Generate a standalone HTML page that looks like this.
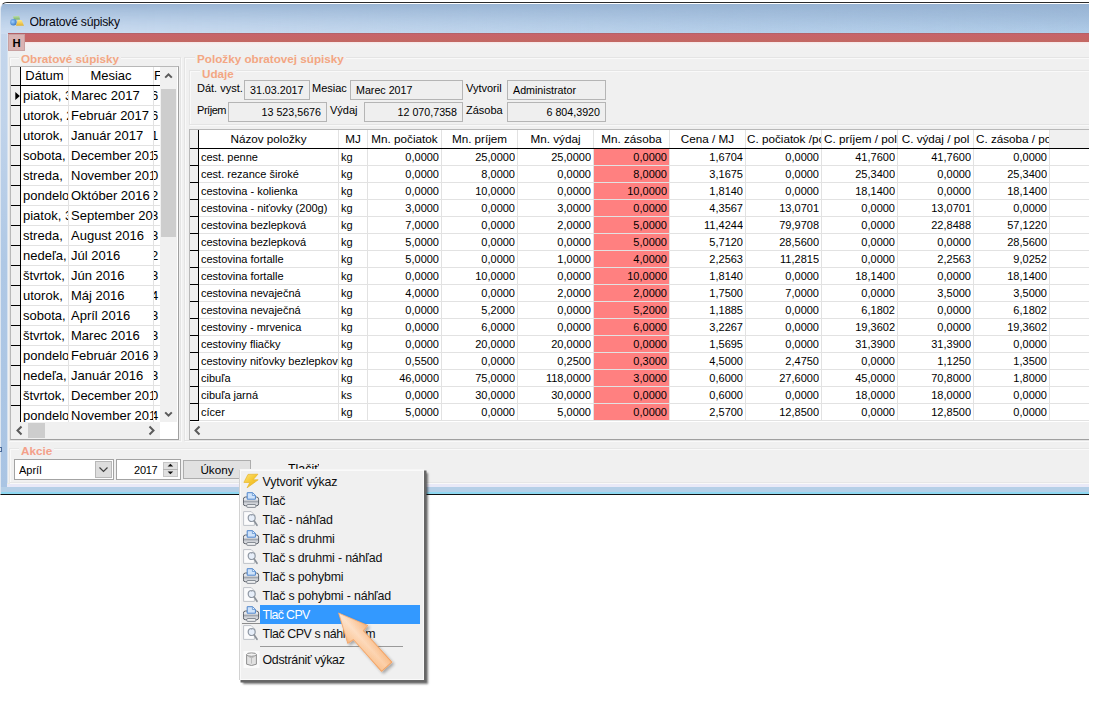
<!DOCTYPE html>
<html><head><meta charset="utf-8"><title>Obratové súpisky</title>
<style>
*{box-sizing:border-box;margin:0;padding:0}
html,body{width:1106px;height:702px;background:#fff;overflow:hidden}
body{font-family:"Liberation Sans",sans-serif;color:#000;position:relative}
.a{position:absolute}
.t{position:absolute;white-space:nowrap;overflow:hidden}
#win{left:0;top:2px;width:1089px;height:493px;background:linear-gradient(180deg,#c6d7ec 0,#c0d3ea 120px,#afc8e5 260px,#a9c4e3 100%);border-top:1px solid #2a2a2a;border-left:1px solid #dde6f1;border-bottom:1px solid #101010;border-top-left-radius:7px;overflow:hidden}
#tb{left:0;top:0;width:1089px;height:31px;background:linear-gradient(180deg,#fff 0,#fff 1px,#97b3d3 1.5px,#9fbbda 40%,#b2ceea 100%)}
#tb2{left:0;top:1px;width:1089px;height:30px;background:linear-gradient(90deg,rgba(206,221,240,.95) 0,rgba(202,218,238,.8) 300px,rgba(190,211,235,.35) 750px,rgba(180,205,232,0) 1089px);-webkit-mask-image:linear-gradient(180deg,rgba(0,0,0,.1) 0,rgba(0,0,0,.55) 50%,rgba(0,0,0,1) 100%);mask-image:linear-gradient(180deg,rgba(0,0,0,.1) 0,rgba(0,0,0,.55) 50%,rgba(0,0,0,1) 100%)}

.gl{position:absolute;font-weight:bold;color:#f3a683;background:#f0f0f0;white-space:nowrap;padding:0 2px}
.gb{position:absolute;border:1px solid #e4e4e4;box-shadow:inset 1px 1px 0 #f9f9f9, 1px 1px 0 #f9f9f9}
.fld{position:absolute;border:1px solid #b5b5b5;background:#efefef;font-size:10.7px;white-space:nowrap;overflow:hidden}
.lb{position:absolute;font-size:11px;white-space:nowrap}
.lc{position:absolute;font-size:13px;white-space:nowrap;overflow:hidden;height:19px;line-height:19px}
.rc{position:absolute;font-size:11px;white-space:nowrap;overflow:hidden;height:16px;line-height:16px}
.rh{position:absolute;font-size:11.7px;white-space:nowrap;overflow:hidden;height:18px;line-height:18px;text-align:center}
.mi{position:absolute;left:262.5px;font-size:12.4px;letter-spacing:-.17px;white-space:nowrap;height:19px;line-height:18px;color:#111}
</style></head><body>

<div id="win" class="a">
<div id="tb" class="a"></div><div id="tb2" class="a"></div>
<div class="a" style="left:6px;top:31px;width:1px;height:455px;background:#d5e2f1"></div>
<div class="a" style="left:6px;top:480px;width:1083px;height:1px;background:#e9ebe2"></div>
<div class="a" style="left:6px;top:481px;width:1083px;height:3px;background:#e9e9f7"></div>
<div class="a" style="left:0;top:484px;width:1089px;height:5px;background:#b5cfe7"></div>
<div class="a" style="left:0;top:489px;width:1089px;height:2px;background:#8fd8f1"></div>
</div>
<svg class="a" style="left:9px;top:14px" width="16" height="14" viewBox="0 0 16 14">
<defs><radialGradient id="gb" cx=".4" cy=".4" r=".7"><stop offset="0" stop-color="#9fd0ff"/><stop offset="1" stop-color="#2f6fc0"/></radialGradient>
<linearGradient id="gy" x1="0" y1="0" x2="0" y2="1"><stop offset="0" stop-color="#ffe98a"/><stop offset="1" stop-color="#e0b030"/></linearGradient>
<linearGradient id="gg" x1="0" y1="0" x2="0" y2="1"><stop offset="0" stop-color="#bfe3a0"/><stop offset="1" stop-color="#6fae4a"/></linearGradient></defs>
<path d="M4 2.2 L10.2 1.8 L11 5.6 L5 5.8Z" fill="url(#gg)" opacity=".85"/>
<circle cx="4.4" cy="8.3" r="3.2" fill="url(#gb)"/>
<path d="M8.6 6 L12.6 6 L15 11.8 L7 11.8 Z" fill="url(#gy)"/>
</svg>
<div class="t" style="left:29.5px;top:14px;font-size:12.2px;letter-spacing:-.24px;line-height:16px;color:#0a0a14">Obratové súpisky</div>
<div class="a" style="left:8px;top:33px;width:1081px;height:9px;background:linear-gradient(180deg,#c8636a,#c36862);border-top:1px solid #b46268"></div>
<div class="a" style="left:8px;top:42px;width:1081px;height:8px;background:linear-gradient(180deg,#f7e4e4 0,#f6f1f1 2px,#f0f0f0 100%)"></div>
<div class="a" style="left:8px;top:50px;width:1081px;height:433px;background:#f0f0f0"></div>
<div class="a" style="left:8px;top:34px;width:17px;height:17px;background:#d9b3b3;border:1px solid #c9a0a0;font-weight:bold;font-size:11.3px;line-height:17px;text-align:center">H</div>
<div class="gb" style="left:9px;top:57px;width:172px;height:384px"></div>
<div class="gl" style="left:19px;top:51px;font-size:11.7px;line-height:16px">Obratové súpisky</div>
<div class="a" style="left:10px;top:66px;width:169px;height:374px;background:#fff;border:1px solid #a0a0a0;border-top-color:#b8b8b8;border-left-color:#b8b8b8"></div>
<div class="a" style="left:11px;top:67px;width:10px;height:355px;background:#f0f0f0"></div>
<div class="a" style="left:20px;top:67px;width:1px;height:355px;background:#000"></div>
<div class="lc" style="left:21px;top:66px;width:47px;text-align:center">Dátum</div>
<div class="lc" style="left:69px;top:66px;width:84px;text-align:center">Mesiac</div>
<div class="lc" style="left:154px;top:66px;width:6px;">F</div>
<div class="a" style="left:68px;top:67px;width:1px;height:355px;background:#e2e2e2"></div>
<div class="a" style="left:153px;top:67px;width:1px;height:355px;background:#e2e2e2"></div>
<div class="a" style="left:11px;top:85px;width:149px;height:1px;background:#000"></div>
<div class="lc" style="left:23px;top:86px;width:45px">piatok, 3</div>
<div class="lc" style="left:71px;top:86px;width:82px">Marec 2017</div>
<div class="lc" style="left:154px;top:86px;width:6px;text-indent:-3px">6</div>
<div class="a" style="left:21px;top:105px;width:139px;height:1px;background:#e2e2e2"></div>
<div class="a" style="left:11px;top:105px;width:9px;height:1px;background:#000"></div>
<div class="lc" style="left:23px;top:106px;width:45px">utorok, 2</div>
<div class="lc" style="left:71px;top:106px;width:82px">Február 2017</div>
<div class="lc" style="left:154px;top:106px;width:6px;text-indent:-3px">6</div>
<div class="a" style="left:21px;top:125px;width:139px;height:1px;background:#e2e2e2"></div>
<div class="a" style="left:11px;top:125px;width:9px;height:1px;background:#000"></div>
<div class="lc" style="left:23px;top:126px;width:45px">utorok,</div>
<div class="lc" style="left:71px;top:126px;width:82px">Január 2017</div>
<div class="lc" style="left:154px;top:126px;width:6px;text-indent:-3px">1</div>
<div class="a" style="left:21px;top:145px;width:139px;height:1px;background:#e2e2e2"></div>
<div class="a" style="left:11px;top:145px;width:9px;height:1px;background:#000"></div>
<div class="lc" style="left:23px;top:146px;width:45px">sobota,</div>
<div class="lc" style="left:71px;top:146px;width:82px">December 2016</div>
<div class="lc" style="left:154px;top:146px;width:6px;text-indent:-3px">5</div>
<div class="a" style="left:21px;top:165px;width:139px;height:1px;background:#e2e2e2"></div>
<div class="a" style="left:11px;top:165px;width:9px;height:1px;background:#000"></div>
<div class="lc" style="left:23px;top:166px;width:45px">streda,</div>
<div class="lc" style="left:71px;top:166px;width:82px">November 2016</div>
<div class="lc" style="left:154px;top:166px;width:6px;text-indent:-3px">0</div>
<div class="a" style="left:21px;top:185px;width:139px;height:1px;background:#e2e2e2"></div>
<div class="a" style="left:11px;top:185px;width:9px;height:1px;background:#000"></div>
<div class="lc" style="left:23px;top:186px;width:45px">pondelo</div>
<div class="lc" style="left:71px;top:186px;width:82px">Október 2016</div>
<div class="lc" style="left:154px;top:186px;width:6px;text-indent:-3px">2</div>
<div class="a" style="left:21px;top:205px;width:139px;height:1px;background:#e2e2e2"></div>
<div class="a" style="left:11px;top:205px;width:9px;height:1px;background:#000"></div>
<div class="lc" style="left:23px;top:206px;width:45px">piatok, 3</div>
<div class="lc" style="left:71px;top:206px;width:82px">September 2016</div>
<div class="lc" style="left:154px;top:206px;width:6px;text-indent:-3px">3</div>
<div class="a" style="left:21px;top:225px;width:139px;height:1px;background:#e2e2e2"></div>
<div class="a" style="left:11px;top:225px;width:9px;height:1px;background:#000"></div>
<div class="lc" style="left:23px;top:226px;width:45px">streda,</div>
<div class="lc" style="left:71px;top:226px;width:82px">August 2016</div>
<div class="lc" style="left:154px;top:226px;width:6px;text-indent:-3px">3</div>
<div class="a" style="left:21px;top:245px;width:139px;height:1px;background:#e2e2e2"></div>
<div class="a" style="left:11px;top:245px;width:9px;height:1px;background:#000"></div>
<div class="lc" style="left:23px;top:246px;width:45px">nedeľa,</div>
<div class="lc" style="left:71px;top:246px;width:82px">Júl 2016</div>
<div class="lc" style="left:154px;top:246px;width:6px;text-indent:-3px">2</div>
<div class="a" style="left:21px;top:265px;width:139px;height:1px;background:#e2e2e2"></div>
<div class="a" style="left:11px;top:265px;width:9px;height:1px;background:#000"></div>
<div class="lc" style="left:23px;top:266px;width:45px">štvrtok,</div>
<div class="lc" style="left:71px;top:266px;width:82px">Jún 2016</div>
<div class="lc" style="left:154px;top:266px;width:6px;text-indent:-3px">3</div>
<div class="a" style="left:21px;top:285px;width:139px;height:1px;background:#e2e2e2"></div>
<div class="a" style="left:11px;top:285px;width:9px;height:1px;background:#000"></div>
<div class="lc" style="left:23px;top:286px;width:45px">utorok,</div>
<div class="lc" style="left:71px;top:286px;width:82px">Máj 2016</div>
<div class="lc" style="left:154px;top:286px;width:6px;text-indent:-3px">4</div>
<div class="a" style="left:21px;top:305px;width:139px;height:1px;background:#e2e2e2"></div>
<div class="a" style="left:11px;top:305px;width:9px;height:1px;background:#000"></div>
<div class="lc" style="left:23px;top:306px;width:45px">sobota,</div>
<div class="lc" style="left:71px;top:306px;width:82px">Apríl 2016</div>
<div class="lc" style="left:154px;top:306px;width:6px;text-indent:-3px">3</div>
<div class="a" style="left:21px;top:325px;width:139px;height:1px;background:#e2e2e2"></div>
<div class="a" style="left:11px;top:325px;width:9px;height:1px;background:#000"></div>
<div class="lc" style="left:23px;top:326px;width:45px">štvrtok,</div>
<div class="lc" style="left:71px;top:326px;width:82px">Marec 2016</div>
<div class="lc" style="left:154px;top:326px;width:6px;text-indent:-3px">3</div>
<div class="a" style="left:21px;top:345px;width:139px;height:1px;background:#e2e2e2"></div>
<div class="a" style="left:11px;top:345px;width:9px;height:1px;background:#000"></div>
<div class="lc" style="left:23px;top:346px;width:45px">pondelo</div>
<div class="lc" style="left:71px;top:346px;width:82px">Február 2016</div>
<div class="lc" style="left:154px;top:346px;width:6px;text-indent:-3px">9</div>
<div class="a" style="left:21px;top:365px;width:139px;height:1px;background:#e2e2e2"></div>
<div class="a" style="left:11px;top:365px;width:9px;height:1px;background:#000"></div>
<div class="lc" style="left:23px;top:366px;width:45px">nedeľa,</div>
<div class="lc" style="left:71px;top:366px;width:82px">Január 2016</div>
<div class="lc" style="left:154px;top:366px;width:6px;text-indent:-3px">3</div>
<div class="a" style="left:21px;top:385px;width:139px;height:1px;background:#e2e2e2"></div>
<div class="a" style="left:11px;top:385px;width:9px;height:1px;background:#000"></div>
<div class="lc" style="left:23px;top:386px;width:45px">štvrtok,</div>
<div class="lc" style="left:71px;top:386px;width:82px">December 2015</div>
<div class="lc" style="left:154px;top:386px;width:6px;text-indent:-3px">0</div>
<div class="a" style="left:21px;top:405px;width:139px;height:1px;background:#e2e2e2"></div>
<div class="a" style="left:11px;top:405px;width:9px;height:1px;background:#000"></div>
<div class="lc" style="left:23px;top:406px;width:45px">pondelo</div>
<div class="lc" style="left:71px;top:406px;width:82px">November 2015</div>
<div class="lc" style="left:154px;top:406px;width:6px;text-indent:-3px">4</div>
<svg class="a" style="left:15px;top:92px" width="6" height="9"><path d="M.3 0 L4.8 4 L.3 8Z" fill="#000"/></svg>
<div class="a" style="left:160px;top:67px;width:17px;height:355px;background:#f0f0f0"></div>
<div class="a" style="left:161px;top:89px;width:15px;height:148px;background:#cdcdcd"></div>
<svg class="a" style="left:164px;top:72px" width="9" height="7"><path d="M1.2 5.6 L4.5 2.3 L7.8 5.6" fill="none" stroke="#5a5a5a" stroke-width="2"/></svg>
<svg class="a" style="left:164px;top:411px" width="9" height="7"><path d="M1.2 1.4 L4.5 4.7 L7.8 1.4" fill="none" stroke="#5a5a5a" stroke-width="2"/></svg>
<div class="a" style="left:11px;top:422px;width:149px;height:17px;background:#f0f0f0"></div>
<div class="a" style="left:160px;top:422px;width:18px;height:17px;background:#fff"></div>
<div class="a" style="left:28px;top:423px;width:17px;height:15px;background:#cdcdcd"></div>
<svg class="a" style="left:15px;top:425px" width="8" height="11"><path d="M6.5 1.5 L2.5 5.5 L6.5 9.5" fill="none" stroke="#5a5a5a" stroke-width="2"/></svg>
<svg class="a" style="left:148px;top:425px" width="8" height="11"><path d="M1.5 1.5 L5.5 5.5 L1.5 9.5" fill="none" stroke="#5a5a5a" stroke-width="2"/></svg>
<div class="gb" style="left:184px;top:57px;width:920px;height:384px"></div>
<div class="gl" style="left:195px;top:51px;font-size:11.7px;line-height:16px">Položky obratovej súpisky</div>
<div class="gb" style="left:189px;top:70px;width:915px;height:55px"></div>
<div class="gl" style="left:200px;top:67px;font-size:11.7px;line-height:14px">Udaje</div>
<div class="lb" style="left:197px;top:82px">Dát. vyst.</div>
<div class="fld" style="left:244px;top:80px;width:66px;height:20px;line-height:18px;padding-left:5px">31.03.2017</div>
<div class="lb" style="left:312px;top:82px">Mesiac</div>
<div class="fld" style="left:350px;top:80px;width:113px;height:20px;line-height:18px;padding-left:5px">Marec 2017</div>
<div class="lb" style="left:466px;top:82px">Vytvoril</div>
<div class="fld" style="left:507px;top:80px;width:99px;height:20px;line-height:18px;padding-left:5px">Administrator</div>
<div class="lb" style="left:197px;top:104px;letter-spacing:-.45px">Príjem</div>
<div class="fld" style="left:228px;top:102px;width:99px;height:20px;line-height:18px;text-align:right;padding-right:5px">13 523,5676</div>
<div class="lb" style="left:330px;top:104px">Výdaj</div>
<div class="fld" style="left:364px;top:102px;width:99px;height:20px;line-height:18px;text-align:right;padding-right:5px">12 070,7358</div>
<div class="lb" style="left:466px;top:104px">Zásoba</div>
<div class="fld" style="left:507px;top:102px;width:99px;height:20px;line-height:18px;text-align:right;padding-right:5px">6 804,3920</div>
<div class="a" style="left:189px;top:129px;width:915px;height:311px;background:#fff;border:1px solid #a0a0a0;border-top-color:#b8b8b8;border-left-color:#b8b8b8"></div>
<div class="a" style="left:190px;top:130px;width:9px;height:291px;background:#f0f0f0"></div>
<div class="a" style="left:198px;top:130px;width:1px;height:291px;background:#000"></div>
<div class="a" style="left:1050px;top:130px;width:54px;height:18px;background:#f0f0f0"></div>
<div class="a" style="left:594px;top:149px;width:75px;height:272px;background:#ff8080"></div>
<div class="rh" style="left:199px;top:130px;width:139px;">Názov položky</div>
<div class="rh" style="left:339px;top:130px;width:28px;">MJ</div>
<div class="rh" style="left:368px;top:130px;width:73px;">Mn. počiatok</div>
<div class="rh" style="left:442px;top:130px;width:75px;">Mn. príjem</div>
<div class="rh" style="left:518px;top:130px;width:75px;">Mn. výdaj</div>
<div class="rh" style="left:594px;top:130px;width:75px;">Mn. zásoba</div>
<div class="rh" style="left:670px;top:130px;width:75px;">Cena / MJ</div>
<div class="rh" style="left:746px;top:130px;width:75px;text-align:left;padding-left:1px;">C. počiatok /po</div>
<div class="rh" style="left:822px;top:130px;width:75px;text-align:left;padding-left:2px;">C. príjem / pol</div>
<div class="rh" style="left:898px;top:130px;width:75px;">C. výdaj / pol</div>
<div class="rh" style="left:974px;top:130px;width:75px;text-align:left;padding-left:2px;">C. zásoba / po</div>
<div class="a" style="left:338px;top:130px;width:1px;height:291px;background:#e2e2e2"></div>
<div class="a" style="left:367px;top:130px;width:1px;height:291px;background:#e2e2e2"></div>
<div class="a" style="left:441px;top:130px;width:1px;height:291px;background:#e2e2e2"></div>
<div class="a" style="left:517px;top:130px;width:1px;height:291px;background:#e2e2e2"></div>
<div class="a" style="left:593px;top:130px;width:1px;height:291px;background:#e2e2e2"></div>
<div class="a" style="left:669px;top:130px;width:1px;height:291px;background:#e2e2e2"></div>
<div class="a" style="left:745px;top:130px;width:1px;height:291px;background:#e2e2e2"></div>
<div class="a" style="left:821px;top:130px;width:1px;height:291px;background:#e2e2e2"></div>
<div class="a" style="left:897px;top:130px;width:1px;height:291px;background:#e2e2e2"></div>
<div class="a" style="left:973px;top:130px;width:1px;height:291px;background:#e2e2e2"></div>
<div class="a" style="left:1049px;top:130px;width:1px;height:291px;background:#e2e2e2"></div>
<div class="a" style="left:190px;top:148px;width:914px;height:1px;background:#000"></div>
<div class="rc" style="left:201px;top:149px;width:137px">cest. penne</div>
<div class="rc" style="left:341px;top:149px;width:26px">kg</div>
<div class="rc" style="left:368px;top:149px;width:71px;text-align:right">0,0000</div>
<div class="rc" style="left:442px;top:149px;width:73px;text-align:right">25,0000</div>
<div class="rc" style="left:518px;top:149px;width:73px;text-align:right">25,0000</div>
<div class="rc" style="left:594px;top:149px;width:73px;text-align:right">0,0000</div>
<div class="rc" style="left:670px;top:149px;width:73px;text-align:right">1,6704</div>
<div class="rc" style="left:746px;top:149px;width:73px;text-align:right">0,0000</div>
<div class="rc" style="left:822px;top:149px;width:73px;text-align:right">41,7600</div>
<div class="rc" style="left:898px;top:149px;width:73px;text-align:right">41,7600</div>
<div class="rc" style="left:974px;top:149px;width:73px;text-align:right">0,0000</div>
<div class="a" style="left:199px;top:165px;width:905px;height:1px;background:#e2e2e2"></div>
<div class="a" style="left:190px;top:165px;width:8px;height:1px;background:#000"></div>
<div class="rc" style="left:201px;top:166px;width:137px">cest. rezance široké</div>
<div class="rc" style="left:341px;top:166px;width:26px">kg</div>
<div class="rc" style="left:368px;top:166px;width:71px;text-align:right">0,0000</div>
<div class="rc" style="left:442px;top:166px;width:73px;text-align:right">8,0000</div>
<div class="rc" style="left:518px;top:166px;width:73px;text-align:right">0,0000</div>
<div class="rc" style="left:594px;top:166px;width:73px;text-align:right">8,0000</div>
<div class="rc" style="left:670px;top:166px;width:73px;text-align:right">3,1675</div>
<div class="rc" style="left:746px;top:166px;width:73px;text-align:right">0,0000</div>
<div class="rc" style="left:822px;top:166px;width:73px;text-align:right">25,3400</div>
<div class="rc" style="left:898px;top:166px;width:73px;text-align:right">0,0000</div>
<div class="rc" style="left:974px;top:166px;width:73px;text-align:right">25,3400</div>
<div class="a" style="left:199px;top:182px;width:905px;height:1px;background:#e2e2e2"></div>
<div class="a" style="left:190px;top:182px;width:8px;height:1px;background:#000"></div>
<div class="rc" style="left:201px;top:183px;width:137px">cestovina - kolienka</div>
<div class="rc" style="left:341px;top:183px;width:26px">kg</div>
<div class="rc" style="left:368px;top:183px;width:71px;text-align:right">0,0000</div>
<div class="rc" style="left:442px;top:183px;width:73px;text-align:right">10,0000</div>
<div class="rc" style="left:518px;top:183px;width:73px;text-align:right">0,0000</div>
<div class="rc" style="left:594px;top:183px;width:73px;text-align:right">10,0000</div>
<div class="rc" style="left:670px;top:183px;width:73px;text-align:right">1,8140</div>
<div class="rc" style="left:746px;top:183px;width:73px;text-align:right">0,0000</div>
<div class="rc" style="left:822px;top:183px;width:73px;text-align:right">18,1400</div>
<div class="rc" style="left:898px;top:183px;width:73px;text-align:right">0,0000</div>
<div class="rc" style="left:974px;top:183px;width:73px;text-align:right">18,1400</div>
<div class="a" style="left:199px;top:199px;width:905px;height:1px;background:#e2e2e2"></div>
<div class="a" style="left:190px;top:199px;width:8px;height:1px;background:#000"></div>
<div class="rc" style="left:201px;top:200px;width:137px">cestovina - niťovky (200g)</div>
<div class="rc" style="left:341px;top:200px;width:26px">kg</div>
<div class="rc" style="left:368px;top:200px;width:71px;text-align:right">3,0000</div>
<div class="rc" style="left:442px;top:200px;width:73px;text-align:right">0,0000</div>
<div class="rc" style="left:518px;top:200px;width:73px;text-align:right">3,0000</div>
<div class="rc" style="left:594px;top:200px;width:73px;text-align:right">0,0000</div>
<div class="rc" style="left:670px;top:200px;width:73px;text-align:right">4,3567</div>
<div class="rc" style="left:746px;top:200px;width:73px;text-align:right">13,0701</div>
<div class="rc" style="left:822px;top:200px;width:73px;text-align:right">0,0000</div>
<div class="rc" style="left:898px;top:200px;width:73px;text-align:right">13,0701</div>
<div class="rc" style="left:974px;top:200px;width:73px;text-align:right">0,0000</div>
<div class="a" style="left:199px;top:216px;width:905px;height:1px;background:#e2e2e2"></div>
<div class="a" style="left:190px;top:216px;width:8px;height:1px;background:#000"></div>
<div class="rc" style="left:201px;top:217px;width:137px">cestovina bezlepková</div>
<div class="rc" style="left:341px;top:217px;width:26px">kg</div>
<div class="rc" style="left:368px;top:217px;width:71px;text-align:right">7,0000</div>
<div class="rc" style="left:442px;top:217px;width:73px;text-align:right">0,0000</div>
<div class="rc" style="left:518px;top:217px;width:73px;text-align:right">2,0000</div>
<div class="rc" style="left:594px;top:217px;width:73px;text-align:right">5,0000</div>
<div class="rc" style="left:670px;top:217px;width:73px;text-align:right">11,4244</div>
<div class="rc" style="left:746px;top:217px;width:73px;text-align:right">79,9708</div>
<div class="rc" style="left:822px;top:217px;width:73px;text-align:right">0,0000</div>
<div class="rc" style="left:898px;top:217px;width:73px;text-align:right">22,8488</div>
<div class="rc" style="left:974px;top:217px;width:73px;text-align:right">57,1220</div>
<div class="a" style="left:199px;top:233px;width:905px;height:1px;background:#e2e2e2"></div>
<div class="a" style="left:190px;top:233px;width:8px;height:1px;background:#000"></div>
<div class="rc" style="left:201px;top:234px;width:137px">cestovina bezlepková</div>
<div class="rc" style="left:341px;top:234px;width:26px">kg</div>
<div class="rc" style="left:368px;top:234px;width:71px;text-align:right">5,0000</div>
<div class="rc" style="left:442px;top:234px;width:73px;text-align:right">0,0000</div>
<div class="rc" style="left:518px;top:234px;width:73px;text-align:right">0,0000</div>
<div class="rc" style="left:594px;top:234px;width:73px;text-align:right">5,0000</div>
<div class="rc" style="left:670px;top:234px;width:73px;text-align:right">5,7120</div>
<div class="rc" style="left:746px;top:234px;width:73px;text-align:right">28,5600</div>
<div class="rc" style="left:822px;top:234px;width:73px;text-align:right">0,0000</div>
<div class="rc" style="left:898px;top:234px;width:73px;text-align:right">0,0000</div>
<div class="rc" style="left:974px;top:234px;width:73px;text-align:right">28,5600</div>
<div class="a" style="left:199px;top:250px;width:905px;height:1px;background:#e2e2e2"></div>
<div class="a" style="left:190px;top:250px;width:8px;height:1px;background:#000"></div>
<div class="rc" style="left:201px;top:251px;width:137px">cestovina fortalle</div>
<div class="rc" style="left:341px;top:251px;width:26px">kg</div>
<div class="rc" style="left:368px;top:251px;width:71px;text-align:right">5,0000</div>
<div class="rc" style="left:442px;top:251px;width:73px;text-align:right">0,0000</div>
<div class="rc" style="left:518px;top:251px;width:73px;text-align:right">1,0000</div>
<div class="rc" style="left:594px;top:251px;width:73px;text-align:right">4,0000</div>
<div class="rc" style="left:670px;top:251px;width:73px;text-align:right">2,2563</div>
<div class="rc" style="left:746px;top:251px;width:73px;text-align:right">11,2815</div>
<div class="rc" style="left:822px;top:251px;width:73px;text-align:right">0,0000</div>
<div class="rc" style="left:898px;top:251px;width:73px;text-align:right">2,2563</div>
<div class="rc" style="left:974px;top:251px;width:73px;text-align:right">9,0252</div>
<div class="a" style="left:199px;top:267px;width:905px;height:1px;background:#e2e2e2"></div>
<div class="a" style="left:190px;top:267px;width:8px;height:1px;background:#000"></div>
<div class="rc" style="left:201px;top:268px;width:137px">cestovina fortalle</div>
<div class="rc" style="left:341px;top:268px;width:26px">kg</div>
<div class="rc" style="left:368px;top:268px;width:71px;text-align:right">0,0000</div>
<div class="rc" style="left:442px;top:268px;width:73px;text-align:right">10,0000</div>
<div class="rc" style="left:518px;top:268px;width:73px;text-align:right">0,0000</div>
<div class="rc" style="left:594px;top:268px;width:73px;text-align:right">10,0000</div>
<div class="rc" style="left:670px;top:268px;width:73px;text-align:right">1,8140</div>
<div class="rc" style="left:746px;top:268px;width:73px;text-align:right">0,0000</div>
<div class="rc" style="left:822px;top:268px;width:73px;text-align:right">18,1400</div>
<div class="rc" style="left:898px;top:268px;width:73px;text-align:right">0,0000</div>
<div class="rc" style="left:974px;top:268px;width:73px;text-align:right">18,1400</div>
<div class="a" style="left:199px;top:284px;width:905px;height:1px;background:#e2e2e2"></div>
<div class="a" style="left:190px;top:284px;width:8px;height:1px;background:#000"></div>
<div class="rc" style="left:201px;top:285px;width:137px">cestovina nevaječná</div>
<div class="rc" style="left:341px;top:285px;width:26px">kg</div>
<div class="rc" style="left:368px;top:285px;width:71px;text-align:right">4,0000</div>
<div class="rc" style="left:442px;top:285px;width:73px;text-align:right">0,0000</div>
<div class="rc" style="left:518px;top:285px;width:73px;text-align:right">2,0000</div>
<div class="rc" style="left:594px;top:285px;width:73px;text-align:right">2,0000</div>
<div class="rc" style="left:670px;top:285px;width:73px;text-align:right">1,7500</div>
<div class="rc" style="left:746px;top:285px;width:73px;text-align:right">7,0000</div>
<div class="rc" style="left:822px;top:285px;width:73px;text-align:right">0,0000</div>
<div class="rc" style="left:898px;top:285px;width:73px;text-align:right">3,5000</div>
<div class="rc" style="left:974px;top:285px;width:73px;text-align:right">3,5000</div>
<div class="a" style="left:199px;top:301px;width:905px;height:1px;background:#e2e2e2"></div>
<div class="a" style="left:190px;top:301px;width:8px;height:1px;background:#000"></div>
<div class="rc" style="left:201px;top:302px;width:137px">cestovina nevaječná</div>
<div class="rc" style="left:341px;top:302px;width:26px">kg</div>
<div class="rc" style="left:368px;top:302px;width:71px;text-align:right">0,0000</div>
<div class="rc" style="left:442px;top:302px;width:73px;text-align:right">5,2000</div>
<div class="rc" style="left:518px;top:302px;width:73px;text-align:right">0,0000</div>
<div class="rc" style="left:594px;top:302px;width:73px;text-align:right">5,2000</div>
<div class="rc" style="left:670px;top:302px;width:73px;text-align:right">1,1885</div>
<div class="rc" style="left:746px;top:302px;width:73px;text-align:right">0,0000</div>
<div class="rc" style="left:822px;top:302px;width:73px;text-align:right">6,1802</div>
<div class="rc" style="left:898px;top:302px;width:73px;text-align:right">0,0000</div>
<div class="rc" style="left:974px;top:302px;width:73px;text-align:right">6,1802</div>
<div class="a" style="left:199px;top:318px;width:905px;height:1px;background:#e2e2e2"></div>
<div class="a" style="left:190px;top:318px;width:8px;height:1px;background:#000"></div>
<div class="rc" style="left:201px;top:319px;width:137px">cestoviny - mrvenica</div>
<div class="rc" style="left:341px;top:319px;width:26px">kg</div>
<div class="rc" style="left:368px;top:319px;width:71px;text-align:right">0,0000</div>
<div class="rc" style="left:442px;top:319px;width:73px;text-align:right">6,0000</div>
<div class="rc" style="left:518px;top:319px;width:73px;text-align:right">0,0000</div>
<div class="rc" style="left:594px;top:319px;width:73px;text-align:right">6,0000</div>
<div class="rc" style="left:670px;top:319px;width:73px;text-align:right">3,2267</div>
<div class="rc" style="left:746px;top:319px;width:73px;text-align:right">0,0000</div>
<div class="rc" style="left:822px;top:319px;width:73px;text-align:right">19,3602</div>
<div class="rc" style="left:898px;top:319px;width:73px;text-align:right">0,0000</div>
<div class="rc" style="left:974px;top:319px;width:73px;text-align:right">19,3602</div>
<div class="a" style="left:199px;top:335px;width:905px;height:1px;background:#e2e2e2"></div>
<div class="a" style="left:190px;top:335px;width:8px;height:1px;background:#000"></div>
<div class="rc" style="left:201px;top:336px;width:137px">cestoviny fliačky</div>
<div class="rc" style="left:341px;top:336px;width:26px">kg</div>
<div class="rc" style="left:368px;top:336px;width:71px;text-align:right">0,0000</div>
<div class="rc" style="left:442px;top:336px;width:73px;text-align:right">20,0000</div>
<div class="rc" style="left:518px;top:336px;width:73px;text-align:right">20,0000</div>
<div class="rc" style="left:594px;top:336px;width:73px;text-align:right">0,0000</div>
<div class="rc" style="left:670px;top:336px;width:73px;text-align:right">1,5695</div>
<div class="rc" style="left:746px;top:336px;width:73px;text-align:right">0,0000</div>
<div class="rc" style="left:822px;top:336px;width:73px;text-align:right">31,3900</div>
<div class="rc" style="left:898px;top:336px;width:73px;text-align:right">31,3900</div>
<div class="rc" style="left:974px;top:336px;width:73px;text-align:right">0,0000</div>
<div class="a" style="left:199px;top:352px;width:905px;height:1px;background:#e2e2e2"></div>
<div class="a" style="left:190px;top:352px;width:8px;height:1px;background:#000"></div>
<div class="rc" style="left:201px;top:353px;width:137px">cestoviny niťovky bezlepkové</div>
<div class="rc" style="left:341px;top:353px;width:26px">kg</div>
<div class="rc" style="left:368px;top:353px;width:71px;text-align:right">0,5500</div>
<div class="rc" style="left:442px;top:353px;width:73px;text-align:right">0,0000</div>
<div class="rc" style="left:518px;top:353px;width:73px;text-align:right">0,2500</div>
<div class="rc" style="left:594px;top:353px;width:73px;text-align:right">0,3000</div>
<div class="rc" style="left:670px;top:353px;width:73px;text-align:right">4,5000</div>
<div class="rc" style="left:746px;top:353px;width:73px;text-align:right">2,4750</div>
<div class="rc" style="left:822px;top:353px;width:73px;text-align:right">0,0000</div>
<div class="rc" style="left:898px;top:353px;width:73px;text-align:right">1,1250</div>
<div class="rc" style="left:974px;top:353px;width:73px;text-align:right">1,3500</div>
<div class="a" style="left:199px;top:369px;width:905px;height:1px;background:#e2e2e2"></div>
<div class="a" style="left:190px;top:369px;width:8px;height:1px;background:#000"></div>
<div class="rc" style="left:201px;top:370px;width:137px">cibuľa</div>
<div class="rc" style="left:341px;top:370px;width:26px">kg</div>
<div class="rc" style="left:368px;top:370px;width:71px;text-align:right">46,0000</div>
<div class="rc" style="left:442px;top:370px;width:73px;text-align:right">75,0000</div>
<div class="rc" style="left:518px;top:370px;width:73px;text-align:right">118,0000</div>
<div class="rc" style="left:594px;top:370px;width:73px;text-align:right">3,0000</div>
<div class="rc" style="left:670px;top:370px;width:73px;text-align:right">0,6000</div>
<div class="rc" style="left:746px;top:370px;width:73px;text-align:right">27,6000</div>
<div class="rc" style="left:822px;top:370px;width:73px;text-align:right">45,0000</div>
<div class="rc" style="left:898px;top:370px;width:73px;text-align:right">70,8000</div>
<div class="rc" style="left:974px;top:370px;width:73px;text-align:right">1,8000</div>
<div class="a" style="left:199px;top:386px;width:905px;height:1px;background:#e2e2e2"></div>
<div class="a" style="left:190px;top:386px;width:8px;height:1px;background:#000"></div>
<div class="rc" style="left:201px;top:387px;width:137px">cibuľa jarná</div>
<div class="rc" style="left:341px;top:387px;width:26px">ks</div>
<div class="rc" style="left:368px;top:387px;width:71px;text-align:right">0,0000</div>
<div class="rc" style="left:442px;top:387px;width:73px;text-align:right">30,0000</div>
<div class="rc" style="left:518px;top:387px;width:73px;text-align:right">30,0000</div>
<div class="rc" style="left:594px;top:387px;width:73px;text-align:right">0,0000</div>
<div class="rc" style="left:670px;top:387px;width:73px;text-align:right">0,6000</div>
<div class="rc" style="left:746px;top:387px;width:73px;text-align:right">0,0000</div>
<div class="rc" style="left:822px;top:387px;width:73px;text-align:right">18,0000</div>
<div class="rc" style="left:898px;top:387px;width:73px;text-align:right">18,0000</div>
<div class="rc" style="left:974px;top:387px;width:73px;text-align:right">0,0000</div>
<div class="a" style="left:199px;top:403px;width:905px;height:1px;background:#e2e2e2"></div>
<div class="a" style="left:190px;top:403px;width:8px;height:1px;background:#000"></div>
<div class="rc" style="left:201px;top:404px;width:137px">cícer</div>
<div class="rc" style="left:341px;top:404px;width:26px">kg</div>
<div class="rc" style="left:368px;top:404px;width:71px;text-align:right">5,0000</div>
<div class="rc" style="left:442px;top:404px;width:73px;text-align:right">0,0000</div>
<div class="rc" style="left:518px;top:404px;width:73px;text-align:right">5,0000</div>
<div class="rc" style="left:594px;top:404px;width:73px;text-align:right">0,0000</div>
<div class="rc" style="left:670px;top:404px;width:73px;text-align:right">2,5700</div>
<div class="rc" style="left:746px;top:404px;width:73px;text-align:right">12,8500</div>
<div class="rc" style="left:822px;top:404px;width:73px;text-align:right">0,0000</div>
<div class="rc" style="left:898px;top:404px;width:73px;text-align:right">12,8500</div>
<div class="rc" style="left:974px;top:404px;width:73px;text-align:right">0,0000</div>
<div class="a" style="left:199px;top:420px;width:905px;height:1px;background:#e2e2e2"></div>
<div class="a" style="left:190px;top:420px;width:8px;height:1px;background:#000"></div>
<div class="a" style="left:190px;top:422px;width:914px;height:17px;background:#f0f0f0"></div>
<svg class="a" style="left:193px;top:425px" width="8" height="11"><path d="M6.5 1.5 L2.5 5.5 L6.5 9.5" fill="none" stroke="#5a5a5a" stroke-width="2"/></svg>
<div class="gb" style="left:9px;top:448px;width:1095px;height:35px;border-color:#e6e6e6"></div>
<div class="gl" style="left:19px;top:444px;font-size:11.7px;line-height:14px;color:#f4a08a">Akcie</div>
<div class="a" style="left:14px;top:459px;width:100px;height:21px;background:#fff;border:1px solid #a3a3a3"></div>
<div class="t" style="left:19px;top:463px;font-size:11px;line-height:15px">Apríl</div>
<div class="a" style="left:95px;top:461px;width:17px;height:17px;background:#dddddd;border:1px solid #b8b8b8"></div>
<svg class="a" style="left:98px;top:466px" width="11" height="8"><path d="M1.5 1.5 L5.5 5.5 L9.5 1.5" fill="none" stroke="#404040" stroke-width="1.2"/></svg>
<div class="a" style="left:116px;top:459px;width:65px;height:21px;background:#fff;border:1px solid #a3a3a3"></div>
<div class="t" style="left:120px;top:463px;width:37.5px;text-align:right;font-size:11px;letter-spacing:-.25px;line-height:15px">2017</div>
<div class="a" style="left:163px;top:462px;width:15px;height:15px;background:#e0e0e0;border:1px solid #c6c6c6"></div>
<div class="a" style="left:163px;top:469px;width:15px;height:1px;background:#b4b4b4"></div>
<svg class="a" style="left:166px;top:463px" width="9" height="13"><path d="M1.6 3.6 L4.4 .8 L7.2 3.6Z M1.6 8.4 L4.4 11.2 L7.2 8.4Z" fill="#111"/></svg>
<div class="a" style="left:183px;top:460px;width:68px;height:19px;background:#e1e1e1;border:1px solid #adadad;font-size:11.7px;line-height:17px;text-align:center">Úkony</div>
<div class="t" style="left:288px;top:461px;font-size:12.4px;line-height:16px;height:10px">Tlačiť</div>
<div class="a" style="left:1089px;top:0;width:17px;height:702px;background:#fff"></div>
<div class="a" style="left:-2px;top:447px;width:4px;height:5px;border:1px solid #4a6a9a"></div>
<div class="a" style="left:239px;top:469px;width:185px;height:211px;background:#f0f0f0;border:1px solid #d2d2d2;border-top-color:#f6f6f6;border-right:none;border-bottom:none;box-shadow:inset 1px 1px 0 #fafafa,inset -1px -1px 0 #fafafa,2px 2px 0 .5px #676767,3.5px 3.5px 2px 0 rgba(0,0,0,.5)"></div>
<svg class="a" style="left:243px;top:473px" width="17" height="17" viewBox="0 0 17 17">
<defs><linearGradient id="bg" x1="0" y1="0" x2="1" y2="1"><stop offset="0" stop-color="#fbe27a"/><stop offset=".5" stop-color="#f6c833"/><stop offset="1" stop-color="#eeb320"/></linearGradient></defs>
<path d="M5 1.4 L14.9 1.2 L10 6.8 L15.2 6.8 L4.1 14.8 L6.8 9.6 L.9 9.4 Z" fill="url(#bg)" stroke="#e7b426" stroke-width=".7" stroke-linejoin="round"/>
</svg>
<div class="mi" style="top:473px;">Vytvoriť výkaz</div>
<svg class="a" style="left:243px;top:492px" width="17" height="17" viewBox="0 0 17 17">
<defs><linearGradient id="pg" x1="0" y1="0" x2="0" y2="1"><stop offset="0" stop-color="#f4f5f7"/><stop offset=".35" stop-color="#e2e4e8"/><stop offset=".5" stop-color="#9ea3ab"/><stop offset=".68" stop-color="#c9ccd2"/><stop offset="1" stop-color="#eceef1"/></linearGradient></defs>
<path d="M2.6 5 h10.8 q2.2 0 2.2 2.2 v4.6 q0 1.9 -1.9 1.9 h-11.4 q-1.9 0 -1.9 -1.9 v-4.6 q0 -2.2 2.2 -2.2z" fill="url(#pg)" stroke="#5b6068" stroke-width="1"/>
<path d="M4.2 .7 h5.4 l2.8 2.6 v3.9 h-8.2z" fill="#cfe3fa" stroke="#4f86cc" stroke-width="1"/>
<path d="M9.4 .9 v2.6 h2.8" fill="#e6f0fc" stroke="#4f86cc" stroke-width=".7"/>
<rect x="3.8" y="12.6" width="9" height="2.7" rx=".6" fill="#f9fafb" stroke="#6f7680" stroke-width=".9"/>
</svg>
<div class="mi" style="top:492px;">Tlač</div>
<svg class="a" style="left:243px;top:511px" width="17" height="17" viewBox="0 0 17 17">
<path d="M.6 .6 h7.6 l3.2 3.2 v10.6 h-10.8z" fill="#fbfbfc" stroke="#bfc3c9" stroke-width="1"/>
<circle cx="8.7" cy="7" r="3.5" fill="#e6eef9" stroke="#8e97a2" stroke-width="1.2"/>
<path d="M8.7 3.2 v1.6" stroke="#a0a8b2" stroke-width="1"/>
<path d="M11.2 9.9 L14 14.3" stroke="#8b9199" stroke-width="1.7" stroke-linecap="round"/>
</svg>
<div class="mi" style="top:511px;">Tlač - náhľad</div>
<svg class="a" style="left:243px;top:530px" width="17" height="17" viewBox="0 0 17 17">
<defs><linearGradient id="pg" x1="0" y1="0" x2="0" y2="1"><stop offset="0" stop-color="#f4f5f7"/><stop offset=".35" stop-color="#e2e4e8"/><stop offset=".5" stop-color="#9ea3ab"/><stop offset=".68" stop-color="#c9ccd2"/><stop offset="1" stop-color="#eceef1"/></linearGradient></defs>
<path d="M2.6 5 h10.8 q2.2 0 2.2 2.2 v4.6 q0 1.9 -1.9 1.9 h-11.4 q-1.9 0 -1.9 -1.9 v-4.6 q0 -2.2 2.2 -2.2z" fill="url(#pg)" stroke="#5b6068" stroke-width="1"/>
<path d="M4.2 .7 h5.4 l2.8 2.6 v3.9 h-8.2z" fill="#cfe3fa" stroke="#4f86cc" stroke-width="1"/>
<path d="M9.4 .9 v2.6 h2.8" fill="#e6f0fc" stroke="#4f86cc" stroke-width=".7"/>
<rect x="3.8" y="12.6" width="9" height="2.7" rx=".6" fill="#f9fafb" stroke="#6f7680" stroke-width=".9"/>
</svg>
<div class="mi" style="top:530px;">Tlač s druhmi</div>
<svg class="a" style="left:243px;top:549px" width="17" height="17" viewBox="0 0 17 17">
<path d="M.6 .6 h7.6 l3.2 3.2 v10.6 h-10.8z" fill="#fbfbfc" stroke="#bfc3c9" stroke-width="1"/>
<circle cx="8.7" cy="7" r="3.5" fill="#e6eef9" stroke="#8e97a2" stroke-width="1.2"/>
<path d="M8.7 3.2 v1.6" stroke="#a0a8b2" stroke-width="1"/>
<path d="M11.2 9.9 L14 14.3" stroke="#8b9199" stroke-width="1.7" stroke-linecap="round"/>
</svg>
<div class="mi" style="top:549px;">Tlač s druhmi - náhľad</div>
<svg class="a" style="left:243px;top:568px" width="17" height="17" viewBox="0 0 17 17">
<defs><linearGradient id="pg" x1="0" y1="0" x2="0" y2="1"><stop offset="0" stop-color="#f4f5f7"/><stop offset=".35" stop-color="#e2e4e8"/><stop offset=".5" stop-color="#9ea3ab"/><stop offset=".68" stop-color="#c9ccd2"/><stop offset="1" stop-color="#eceef1"/></linearGradient></defs>
<path d="M2.6 5 h10.8 q2.2 0 2.2 2.2 v4.6 q0 1.9 -1.9 1.9 h-11.4 q-1.9 0 -1.9 -1.9 v-4.6 q0 -2.2 2.2 -2.2z" fill="url(#pg)" stroke="#5b6068" stroke-width="1"/>
<path d="M4.2 .7 h5.4 l2.8 2.6 v3.9 h-8.2z" fill="#cfe3fa" stroke="#4f86cc" stroke-width="1"/>
<path d="M9.4 .9 v2.6 h2.8" fill="#e6f0fc" stroke="#4f86cc" stroke-width=".7"/>
<rect x="3.8" y="12.6" width="9" height="2.7" rx=".6" fill="#f9fafb" stroke="#6f7680" stroke-width=".9"/>
</svg>
<div class="mi" style="top:568px;">Tlač s pohybmi</div>
<svg class="a" style="left:243px;top:587px" width="17" height="17" viewBox="0 0 17 17">
<path d="M.6 .6 h7.6 l3.2 3.2 v10.6 h-10.8z" fill="#fbfbfc" stroke="#bfc3c9" stroke-width="1"/>
<circle cx="8.7" cy="7" r="3.5" fill="#e6eef9" stroke="#8e97a2" stroke-width="1.2"/>
<path d="M8.7 3.2 v1.6" stroke="#a0a8b2" stroke-width="1"/>
<path d="M11.2 9.9 L14 14.3" stroke="#8b9199" stroke-width="1.7" stroke-linecap="round"/>
</svg>
<div class="mi" style="top:587px;">Tlač s pohybmi - náhľad</div>
<div class="a" style="left:260px;top:605px;width:160px;height:19px;background:#3399ff"></div>
<div class="a" style="left:242px;top:623px;width:18px;height:1px;background:#8c8c8c"></div>
<svg class="a" style="left:243px;top:606px" width="17" height="17" viewBox="0 0 17 17">
<defs><linearGradient id="pg" x1="0" y1="0" x2="0" y2="1"><stop offset="0" stop-color="#f4f5f7"/><stop offset=".35" stop-color="#e2e4e8"/><stop offset=".5" stop-color="#9ea3ab"/><stop offset=".68" stop-color="#c9ccd2"/><stop offset="1" stop-color="#eceef1"/></linearGradient></defs>
<path d="M2.6 5 h10.8 q2.2 0 2.2 2.2 v4.6 q0 1.9 -1.9 1.9 h-11.4 q-1.9 0 -1.9 -1.9 v-4.6 q0 -2.2 2.2 -2.2z" fill="url(#pg)" stroke="#5b6068" stroke-width="1"/>
<path d="M4.2 .7 h5.4 l2.8 2.6 v3.9 h-8.2z" fill="#cfe3fa" stroke="#4f86cc" stroke-width="1"/>
<path d="M9.4 .9 v2.6 h2.8" fill="#e6f0fc" stroke="#4f86cc" stroke-width=".7"/>
<rect x="3.8" y="12.6" width="9" height="2.7" rx=".6" fill="#f9fafb" stroke="#6f7680" stroke-width=".9"/>
</svg>
<div class="mi" style="top:606px;color:#fff;letter-spacing:-.65px">Tlač CPV</div>
<svg class="a" style="left:243px;top:625px" width="17" height="17" viewBox="0 0 17 17">
<path d="M.6 .6 h7.6 l3.2 3.2 v10.6 h-10.8z" fill="#fbfbfc" stroke="#bfc3c9" stroke-width="1"/>
<circle cx="8.7" cy="7" r="3.5" fill="#e6eef9" stroke="#8e97a2" stroke-width="1.2"/>
<path d="M8.7 3.2 v1.6" stroke="#a0a8b2" stroke-width="1"/>
<path d="M11.2 9.9 L14 14.3" stroke="#8b9199" stroke-width="1.7" stroke-linecap="round"/>
</svg>
<div class="mi" style="top:625px;letter-spacing:-.42px">Tlač CPV s náhľadom</div>
<div class="a" style="left:260px;top:646px;width:143px;height:1px;background:#9a9a9a"></div>
<svg class="a" style="left:243px;top:651px" width="17" height="17" viewBox="0 0 17 17">
<rect x=".5" y="0" width="16" height="17" fill="#fbfbfb"/>
<path d="M3.6 3.6 v9.6 q4.9 2.6 9.8 0 v-9.6" fill="#e2e2e2" stroke="#909090" stroke-width="1"/>
<ellipse cx="8.5" cy="3.6" rx="4.9" ry="1.7" fill="#f2f2f2" stroke="#909090" stroke-width="1"/>
<path d="M6.5 6.5 h4 M8.5 6.5 v6" stroke="#bdbdbd" stroke-width="1"/>
</svg>
<div class="mi" style="top:651px;letter-spacing:-.3px">Odstrániť výkaz</div>
<svg class="a" style="left:300px;top:590px" width="120" height="110" viewBox="300 590 120 110">
<defs><linearGradient id="ag" gradientUnits="userSpaceOnUse" x1="0" y1="-13.5" x2="0" y2="13.5"><stop offset="0" stop-color="#f4a262"/><stop offset=".18" stop-color="#f9bd8a"/><stop offset=".5" stop-color="#fddcc0"/><stop offset=".82" stop-color="#fbc595"/><stop offset="1" stop-color="#f3a060"/></linearGradient>
<linearGradient id="ag2" gradientUnits="userSpaceOnUse" x1="0" y1="0" x2="72" y2="0"><stop offset="0" stop-color="#fff" stop-opacity=".25"/><stop offset="1" stop-color="#f8a860" stop-opacity=".25"/></linearGradient>
<filter id="sh" x="-30%" y="-30%" width="170%" height="170%"><feGaussianBlur in="SourceAlpha" stdDeviation="1.6"/><feOffset dx="1.5" dy="2"/><feComponentTransfer><feFuncA type="linear" slope=".3"/></feComponentTransfer><feMerge><feMergeNode/><feMergeNode in="SourceGraphic"/></feMerge></filter></defs>
<g filter="url(#sh)"><g transform="translate(338.7 613.1) rotate(48.2)">
<path d="M0 0 L28.5 -13.3 L29.5 -6.6 L72 -6.85 L72 6.85 L29.5 6.6 L28.5 13.3 Z" fill="url(#ag)" stroke="#f2a365" stroke-width="1" stroke-linejoin="round"/>
<path d="M0 0 L28.5 -13.3 L29.5 -6.6 L72 -6.85 L72 6.85 L29.5 6.6 L28.5 13.3 Z" fill="url(#ag2)"/>
</g></g>
</svg>
</body></html>
